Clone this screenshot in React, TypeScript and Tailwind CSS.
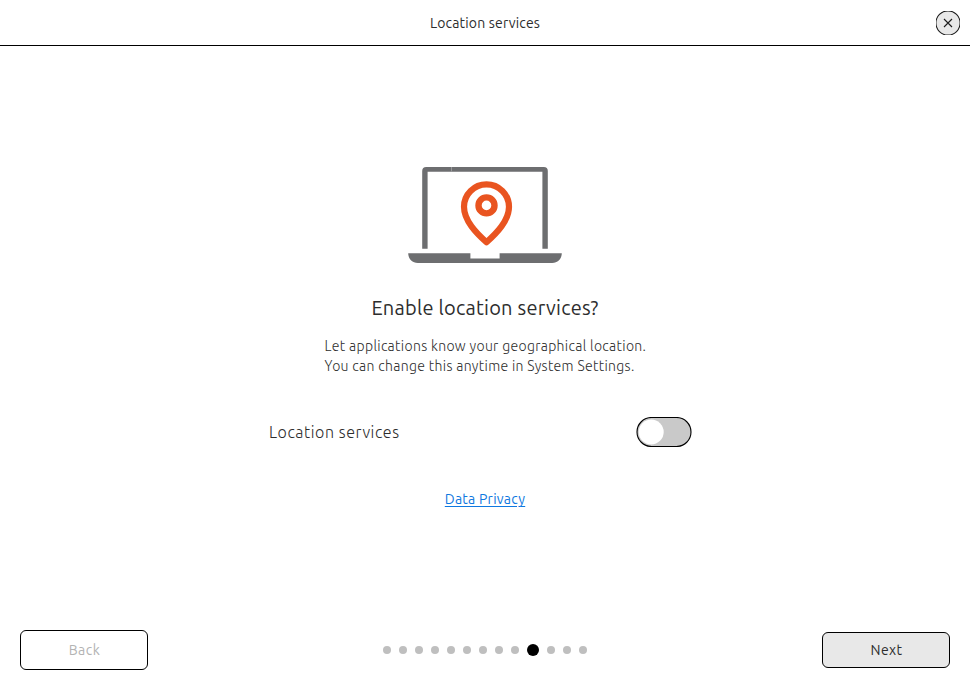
import React from "react";

const STEPS = 13;
const CURRENT_STEP = 9;

function LocationIllustration() {
  return (
    <svg className="h-[98px] w-[156px]" viewBox="407 166 156 98" fill="none" aria-hidden="true">
      <path d="M422.2 248.8V171a4 4 0 0 1 4-4h117.6a4 4 0 0 1 4 4v77.8h-5.4V171.8H427.6v77Z" fill="#6d6e70" />
      <path d="M451.5 167v4.5" stroke="#a2a3a4" strokeWidth="0.8" />
      <path d="M408.2 253.2h62.2v5.2h29.2v-5.2h62.2c-.2 5.8-4 9.8-9.6 9.8H417.8c-5.6 0-9.4-4-9.6-9.8Z" fill="#6d6e70" />
      <path
        d="M486.5 184.4c12.4 0 22.5 10 22.5 22.4 0 14-12.5 26.4-22.5 35.5-10-9.1-22.5-21.5-22.5-35.5 0-12.4 10.1-22.4 22.5-22.4Z"
        stroke="#e95420"
        strokeWidth="6.2"
        strokeLinejoin="round"
      />
      <circle cx="486.5" cy="205.4" r="8" stroke="#e95420" strokeWidth="6.4" />
    </svg>
  );
}

function Switch() {
  return (
    <button role="switch" aria-checked="false" aria-label="Location services" className="h-[30px] w-14">
      <svg className="h-[30px] w-14" viewBox="0 0 56 30" aria-hidden="true">
        <rect x="1" y="0.5" width="54" height="29" rx="14.5" fill="#c9c9c9" stroke="#000" strokeWidth="1.1" />
        <circle cx="15.2" cy="15" r="12.5" fill="#fff" />
      </svg>
    </button>
  );
}

export default function App() {
  return (
    <div className="flex h-[690px] w-[970px] flex-col bg-white font-['Ubuntu','Noto_Sans',sans-serif] text-[#2d2d2d]">
      <header className="grid h-[46px] shrink-0 grid-cols-[1fr_auto_1fr] items-center border-b border-black px-2.5">
        <span />
        <h1 className="text-[14px] leading-5 tracking-[0.17px] whitespace-nowrap">Location services</h1>
        <button aria-label="Close" className="size-6 justify-self-end">
          <svg className="size-6 overflow-hidden" viewBox="0 0 24 24" stroke="#1c1c1c" aria-hidden="true">
            <circle cx="12" cy="12" r="12.1" fill="#e8e8e8" strokeWidth="1.1" />
            <path d="M8 8l8 8M16 8l-8 8" strokeWidth="1.1" />
          </svg>
        </button>
      </header>

      <main className="flex flex-1 flex-col items-center pt-[120px]">
        <LocationIllustration />
        <h2 className="mt-[30px] text-[20px] leading-7 tracking-[0.24px] whitespace-nowrap">
          Enable location services?
        </h2>
        <div className="mt-3.5 w-[321px] text-[14px] leading-5 font-light tracking-[0.33px] whitespace-nowrap">
          <p>Let applications know your geographical location.</p>
          <p>You can change this anytime in System Settings.</p>
        </div>
        <div className="mt-[41px] flex w-[432px] items-center justify-between pr-[9px]">
          <span className="text-[16px] leading-6 font-light tracking-[0.57px] whitespace-nowrap">Location services</span>
          <Switch />
        </div>
        <a
          href="#"
          className="mt-[42px] text-[14px] leading-5 tracking-[0.25px] whitespace-nowrap text-[#0f78e0] underline decoration-1 underline-offset-2"
        >
          Data Privacy
        </a>
      </main>

      <footer className="mb-5 flex h-10 shrink-0 items-center justify-between px-5">
        <button className="h-10 w-32 rounded-md border border-black bg-white pl-px text-[14px] leading-5 tracking-[0.5px] text-[#b3b3b3]">
          Back
        </button>
        <div className="flex items-center gap-2">
          {Array.from({ length: STEPS }, (_, i) => (
            <span
              key={i}
              className={i === CURRENT_STEP ? "size-3 rounded-full bg-black" : "size-2 rounded-full bg-[#bfbfbf]"}
            />
          ))}
        </div>
        <button className="h-9 w-32 rounded-md border border-black bg-[#e8e8e8] pl-px text-[14px] leading-5 tracking-[0.4px]">
          Next
        </button>
      </footer>
    </div>
  );
}
